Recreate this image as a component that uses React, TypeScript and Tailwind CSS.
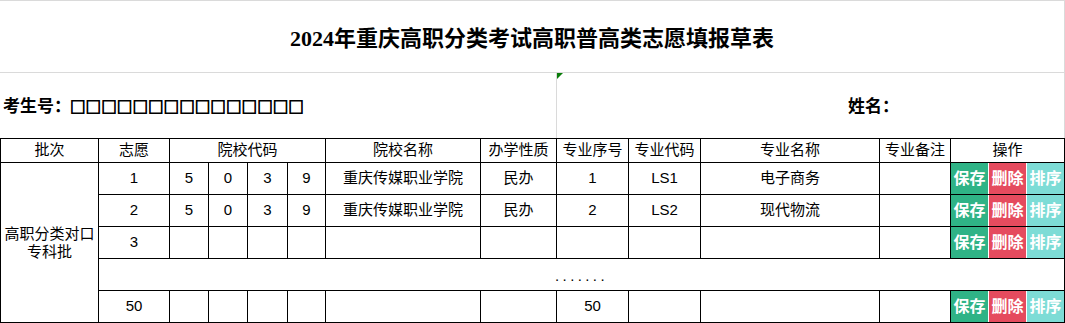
import React from 'react'

const cols = [98, 71, 39, 39, 40, 38, 155, 76, 72, 72, 179, 71, 114]

interface Row {
  no: string;
  code: string[];
  school: string;
  kind: string;
  seq: string;
  major: string;
  majorName: string;
}

const rows: Row[] = [
  { no: "1", code: ["5", "0", "3", "9"], school: "重庆传媒职业学院", kind: "民办", seq: "1", major: "LS1", majorName: "电子商务" },
  { no: "2", code: ["5", "0", "3", "9"], school: "重庆传媒职业学院", kind: "民办", seq: "2", major: "LS2", majorName: "现代物流" },
  { no: "3", code: ["", "", "", ""], school: "", kind: "", seq: "", major: "", majorName: "" },
]

const lastRow: Row = { no: "50", code: ["", "", "", ""], school: "", kind: "", seq: "50", major: "", majorName: "" }

const cell = "border-r border-b border-black text-center p-0 align-middle whitespace-nowrap"

const Actions: React.FC = () => (
  <td className="border-r border-b border-black p-0">
    <div className="flex gap-px h-[31px] bg-white text-white font-bold text-[16px]">
      <button className="flex-1 bg-[#2fb386] flex items-center justify-center">保存</button>
      <button className="flex-1 bg-[#e54b5e] flex items-center justify-center">删除</button>
      <button className="flex-1 bg-[#7ddcd6] flex items-center justify-center">排序</button>
    </div>
  </td>
)

const DataRow: React.FC<{ row: Row; first?: boolean }> = ({ row, first }) => (
  <tr className="h-[32px]">
    {first && (
      <td rowSpan={5} className="border-r border-b border-black text-center align-middle px-[3px] leading-[18px]">
        高职分类对口专科批
      </td>
    )}
    <td className={cell}>{row.no}</td>
    {row.code.map((c, i) => (
      <td key={i} className={cell}>{c}</td>
    ))}
    <td className={cell}>{row.school}</td>
    <td className={cell}>{row.kind}</td>
    <td className={cell}>{row.seq}</td>
    <td className={cell}>{row.major}</td>
    <td className={cell}>{row.majorName}</td>
    <td className={cell}></td>
    <Actions />
  </tr>
)

export default function App() {
  return (
    <div className="w-[1065px] h-[323px] bg-white overflow-hidden text-black font-['Liberation_Sans','Noto_Sans_CJK_SC',sans-serif]">
      <div className="h-[73px] border-t border-b border-r border-[#dadada] flex items-center justify-center">
        <h1 className="text-[22px] font-bold font-['Liberation_Serif','Noto_Sans_CJK_SC',serif] mt-[4px]">
          2024年重庆高职分类考试高职普高类志愿填报草表
        </h1>
      </div>

      <div className="h-[65px] flex border-r border-[#dadada]">
        <div className="w-[556px] flex items-center pl-[3px] pt-[3px] font-bold">
          <span className="text-[17px]">考生号：</span>
          <span className="text-[15.6px] -ml-[1px] text-black font-['Noto_Sans_CJK_SC',sans-serif] [-webkit-text-stroke:0.8px_black]">□□□□□□□□□□□□□□□</span>
        </div>
        <div className="relative flex-1 border-l border-[#dadada] flex items-center pl-[291px] pt-[3px]">
          <span className="absolute left-0 top-0 w-0 h-0 border-t-[6px] border-r-[6px] border-t-[#0a7d0a] border-r-transparent"></span>
          <span className="text-[17px] font-bold">姓名：</span>
        </div>
      </div>

      <table className="table-fixed border-separate border-spacing-0 border-l border-t border-black text-[15px] w-[1065px]">
        <colgroup>
          {cols.map((w, i) => (
            <col key={i} style={{ width: w }} />
          ))}
        </colgroup>
        <thead>
          <tr className="h-[24px]">
            <th className={cell + " font-normal"}>批次</th>
            <th className={cell + " font-normal"}>志愿</th>
            <th colSpan={4} className={cell + " font-normal"}>院校代码</th>
            <th className={cell + " font-normal"}>院校名称</th>
            <th className={cell + " font-normal"}>办学性质</th>
            <th className={cell + " font-normal"}>专业序号</th>
            <th className={cell + " font-normal"}>专业代码</th>
            <th className={cell + " font-normal"}>专业名称</th>
            <th className={cell + " font-normal"}>专业备注</th>
            <th className={cell + " font-normal"}>操作</th>
          </tr>
        </thead>
        <tbody>
          {rows.map((r, i) => (
            <DataRow key={i} row={r} first={i === 0} />
          ))}
          <tr className="h-[32px]">
            <td colSpan={12} className={cell + " tracking-[3.4px] pt-[4px]"}>.......</td>
          </tr>
          <DataRow row={lastRow} />
        </tbody>
      </table>
    </div>
  )
}
